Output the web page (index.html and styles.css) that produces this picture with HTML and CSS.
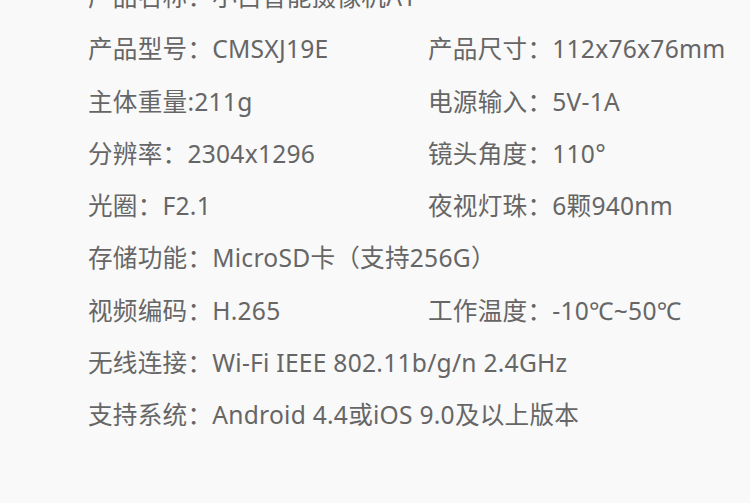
FILE: index.html
```html
<!DOCTYPE html>
<html lang="zh-CN">
<head>
  <meta charset="UTF-8">
  <meta name="viewport" content="width=device-width, initial-scale=1.0">
  <title>产品参数</title>
  <link rel="stylesheet" href="styles.css">
</head>
<body>
  <div id="spec-container">
    <ul class="spec-list">
      <li class="wide">产品名称：小白智能摄像机A1</li>
      <li>产品型号：CMSXJ19E</li>
      <li>产品尺寸：112x76x76mm</li>
      <li>主体重量:211g</li>
      <li>电源输入：5V-1A</li>
      <li>分辨率：2304x1296</li>
      <li>镜头角度：110°</li>
      <li>光圈：F2.1</li>
      <li>夜视灯珠：6颗940nm</li>
      <li class="wide">存储功能：MicroSD卡（支持256G）</li>
      <li>视频编码：H.265</li>
      <li>工作温度：-10℃~50℃</li>
      <li class="wide">无线连接：Wi-Fi IEEE 802.11b/g/n 2.4GHz</li>
      <li class="wide">支持系统：Android 4.4或iOS 9.0及以上版本</li>
    </ul>
  </div>
</body>
</html>
```

FILE: styles.css
```css
html, body {
  height: 100%;
}
body {
  margin: 0;
  padding: 0;
  background: #f9f9f9;
  font-family: 'Noto Sans', 'Noto Sans CJK SC', sans-serif;
  color: #666;
  overflow: hidden;
}
#spec-container {
  padding-left: 88px;
}
.spec-list {
  list-style: none;
  margin: -29px 0 0;
  padding: 0;
  display: grid;
  grid-template-columns: 340px 1fr;
  grid-auto-rows: 52.3px;
  font-size: 24.6px;
  line-height: 52.3px;
  letter-spacing: 0.25px;
}
.spec-list li {
  white-space: nowrap;
}
.spec-list li.wide {
  grid-column: 1 / 3;
}
```
